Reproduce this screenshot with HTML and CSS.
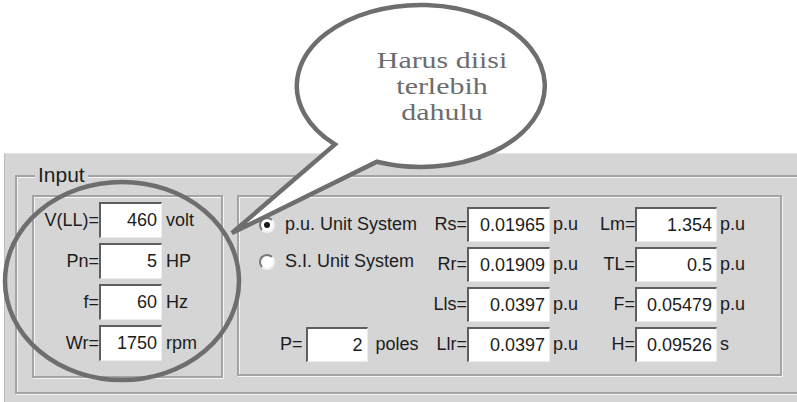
FILE: index.html
```html
<!DOCTYPE html>
<html>
<head>
<meta charset="utf-8">
<link rel="stylesheet" href="styles.css">
</head>
<body>
<div class="window">
  <div class="group">
    <div class="legend">Input</div>
    <div class="panel panel-left">
      <span class="lbl">V(LL)=</span><span class="box">460</span><span class="unit">volt</span>
      <span class="lbl">Pn=</span><span class="box">5</span><span class="unit">HP</span>
      <span class="lbl">f=</span><span class="box">60</span><span class="unit">Hz</span>
      <span class="lbl">Wr=</span><span class="box">1750</span><span class="unit">rpm</span>
    </div>
    <div class="panel panel-right">
      <div class="opt"><span class="radio on"></span><span>p.u. Unit System</span></div>
      <span class="lbl">Rs=</span><span class="box">0.01965</span><span class="unit">p.u</span>
      <span class="lbl">Lm=</span><span class="box">1.354</span><span class="unit">p.u</span>

      <div class="opt opt-up"><span class="radio"></span><span>S.I. Unit System</span></div>
      <span class="lbl">Rr=</span><span class="box">0.01909</span><span class="unit">p.u</span>
      <span class="lbl">TL=</span><span class="box">0.5</span><span class="unit">p.u</span>

      <div class="opt"></div>
      <span class="lbl">Lls=</span><span class="box">0.0397</span><span class="unit">p.u</span>
      <span class="lbl">F=</span><span class="box">0.05479</span><span class="unit">p.u</span>

      <div class="poles"><span>P=</span><span class="box pbox">2</span><span class="punit">poles</span></div>
      <span class="lbl">Llr=</span><span class="box">0.0397</span><span class="unit">p.u</span>
      <span class="lbl">H=</span><span class="box">0.09526</span><span class="unit">s</span>
    </div>
  </div>
</div>
<svg class="overlay" width="797" height="402" viewBox="0 0 797 402">
  <path class="bubble" d="M 335 144.4 A 124 81 0 1 1 377 161.7 L 232 233 Z"/>
  <ellipse class="ring" cx="122" cy="281" rx="117" ry="99"/>
</svg>
<div class="bubble-text">Harus diisi<br>terlebih<br>dahulu</div>
</body>
</html>
```
FILE: styles.css
```css
html, body {
  margin: 0;
  padding: 0;
}
body {
  position: relative;
  width: 797px;
  height: 402px;
  overflow: hidden;
  background: #ffffff;
  font-family: "Liberation Sans", Arial, sans-serif;
  font-size: 18px;
  color: #1c1c1c;
}
.window {
  margin-top: 153px;
  margin-left: 4px;
  width: 793px;
  height: 249px;
  box-sizing: border-box;
  background: #d5d5d5;
  border-left: 1px solid #bcbcbc;
  border-top: 1px solid #e2e2e2;
  padding-top: 21px;
  padding-left: 10px;
}
.group {
  position: relative;
  width: 800px;
  height: 219px;
  box-sizing: border-box;
  border: 2px solid #a4a4a4;
  box-shadow: inset 1px 1px 0 #f4f4f4, 1px 1px 0 #f4f4f4;
  padding: 18px 0 0 15px;
  display: flex;
  align-items: flex-start;
  gap: 14px;
}
.legend {
  position: absolute;
  left: 18px;
  top: -15px;
  padding: 0 3px;
  background: #d5d5d5;
  font-size: 21px;
  line-height: 26px;
  color: #1e1e1e;
}
.panel {
  box-sizing: border-box;
  border: 2px solid #a4a4a4;
  box-shadow: inset 1px 1px 0 #f4f4f4, 1px 1px 0 #f4f4f4;
  display: grid;
  align-items: center;
}
.panel-left {
  width: 191px;
  height: 183px;
  padding-top: 5px;
  grid-template-columns: 65px 63px auto;
  grid-auto-rows: 36px;
  row-gap: 5px;
  align-content: start;
}
.panel-right {
  width: 545px;
  height: 181px;
  padding-top: 10px;
  grid-template-columns: 186px 42px 83px 50px 35px 82px auto;
  grid-auto-rows: 35px;
  row-gap: 5px;
  align-content: start;
}
.lbl {
  text-align: right;
  white-space: nowrap;
}
.box {
  height: 100%;
  box-sizing: border-box;
  background: #ffffff;
  border-style: solid;
  border-width: 2px 1px 1px 2px;
  border-color: #5e5e5e #ececec #ececec #5e5e5e;
  text-align: right;
  padding-right: 4px;
  display: flex;
  align-items: center;
  justify-content: flex-end;
  white-space: nowrap;
}
.unit {
  padding-left: 3px;
  white-space: nowrap;
}
.panel-left .unit {
  padding-left: 4px;
}
.opt {
  display: flex;
  align-items: center;
  gap: 10px;
  padding-left: 20px;
  white-space: nowrap;
  height: 100%;
}
.opt-up {
  margin-top: -6px;
}
.radio {
  width: 16px;
  height: 16px;
  box-sizing: border-box;
  border-radius: 50%;
  background: #ffffff;
  border: 2px solid;
  border-color: #7a7a7a #f2f2f2 #f2f2f2 #7a7a7a;
  position: relative;
  flex: none;
}
.radio.on::after {
  content: "";
  position: absolute;
  left: 3px;
  top: 3px;
  width: 6px;
  height: 6px;
  border-radius: 50%;
  background: #1a1a1a;
}
.poles {
  display: flex;
  align-items: center;
  height: 100%;
  padding-left: 41px;
  white-space: nowrap;
}
.pbox {
  width: 62px;
  margin-left: 3px;
}
.punit {
  margin-left: 8px;
}
.overlay {
  position: absolute;
  left: 0;
  top: 0;
  pointer-events: none;
}
.bubble {
  fill: #ffffff;
  stroke: #6e6e6e;
  stroke-width: 4.5;
  stroke-linejoin: miter;
}
.ring {
  fill: none;
  stroke: #6e6e6e;
  stroke-width: 4.5;
}
.bubble-text {
  position: absolute;
  left: 342px;
  top: 48px;
  width: 200px;
  text-align: center;
  font-family: "Liberation Serif", "Times New Roman", serif;
  font-size: 23px;
  line-height: 26px;
  color: #6c6c6c;
  transform: scaleX(1.3);
}
```
